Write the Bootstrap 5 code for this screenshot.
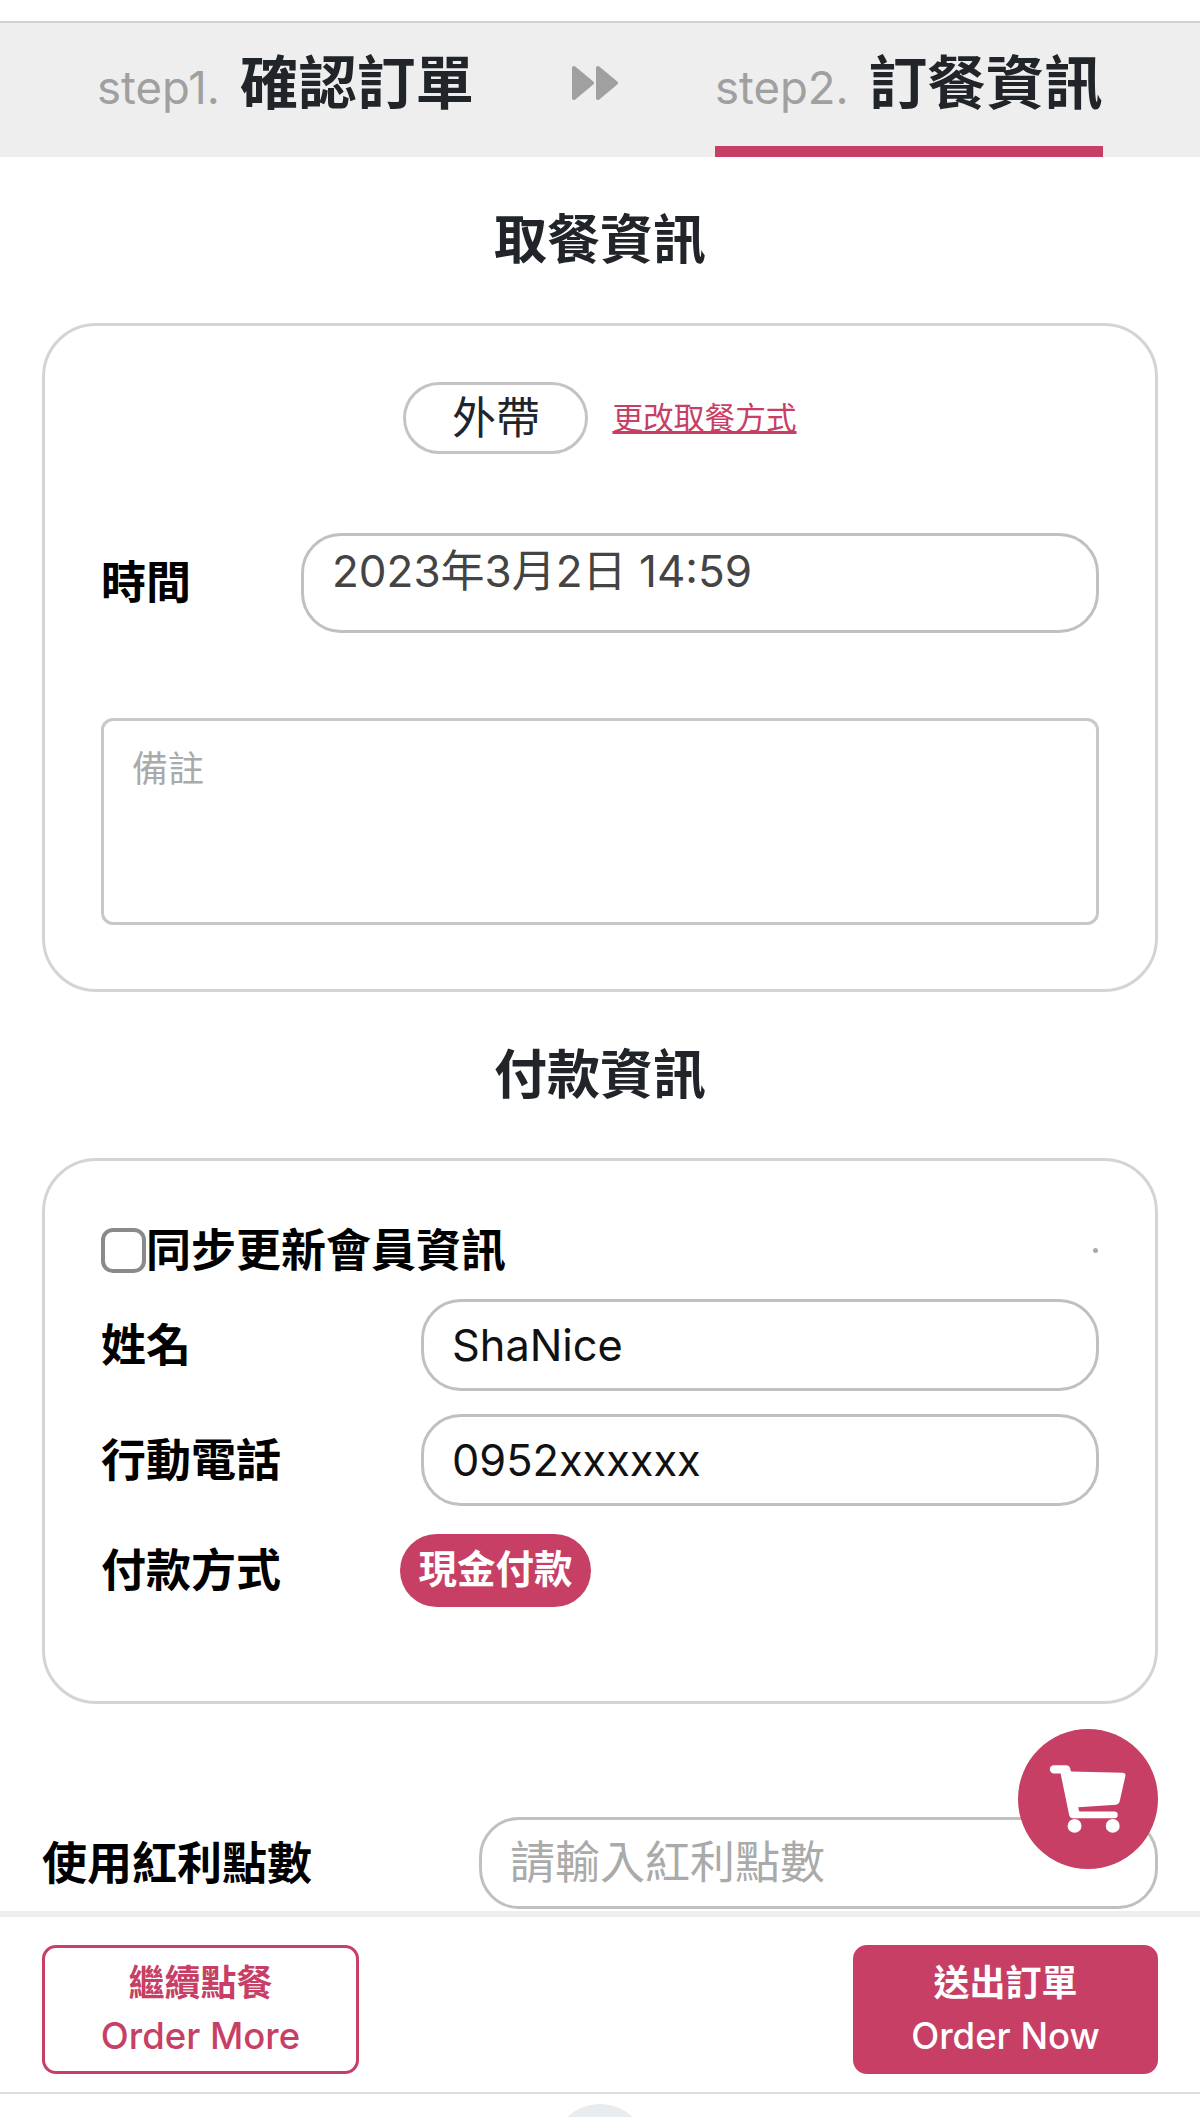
<!DOCTYPE html>
<html lang="zh-Hant">
<head>
  <meta charset="UTF-8" />
  <meta name="viewport" content="width=device-width, initial-scale=1" />
  <title>訂餐資訊</title>
  <link href="https://cdn.jsdelivr.net/npm/bootstrap@5.3.0/dist/css/bootstrap.min.css" rel="stylesheet" />
  <style>
    html, body { height: 2117px; overflow: hidden; }
    body { font-family: Inter, "Noto Sans CJK TC", sans-serif; color: #000; }

    /* step header */
    .step-bar { margin-top: 21px; height: 136px; background: #eee; border-top: 2px solid #d2d2d2; padding-left: 97px; }
    .step-item { height: 134px; padding-top: 30px; line-height: 60px; column-gap: 20px; }
    .step-item.is-active { border-bottom: 11px solid #c83f66; margin-left: 97px; width: 388px; }
    .step-num { font-size: 45.5px; color: #a0a0a0; }
    .step-name { font-size: 58.5px; font-weight: 700; color: #212529; }
    .step-arrow { margin-left: 98px; margin-top: 42px; width: 46px; height: 36px; }

    .sec-title { height: 166px; margin: 0; line-height: 166px; font-size: 53px; font-weight: 700; color: #212529; text-align: center; }
    .page-body { padding: 0 42px; }
    .info-box { border: 3px solid #d4d4d4; border-radius: 54px; padding: 56px 56px 64px; }
    .info-box.pay-box { padding: 67px 56px 94px; }

    .pickup-pill { width: 185px; height: 72px; line-height: 66px; font-size: 44px; text-align: center; color: #212529; border: 3px solid #c4c4c4; border-radius: 36px; }
    .pickup-link { font-size: 30.7px; color: #c83f66; }
    .field-label { font-size: 45px; font-weight: 700; line-height: 45px; flex-shrink: 0; }
    .label-up { padding-bottom: 2px; }

    .round-input.form-control { font-size: 43.3px; height: 92px; padding: 0 28px; border: 3px solid #c0c0c0; border-radius: 40px; color: #111; box-shadow: none; }
    .round-input.form-control::placeholder { color: #aaa; font-size: 45px; }
    .round-input.date-input { height: 100px; padding-bottom: 30px; font-size: 44px; color: #444; }
    .note-input.form-control { height: 207px; margin-top: 85px; padding: 21px 28px; font-size: 36px; border: 3px solid #c8c8c8; border-radius: 12px; resize: none; }
    .note-input.form-control::placeholder { color: #aaa; }

    .sync-check.form-check-input { width: 45px; height: 45px; margin: 0; border: 4px solid #8a8a8a; border-radius: 12px; flex-shrink: 0; }
    .tiny-dot { width: 5px; height: 5px; border-radius: 50%; background: #aaa; margin-right: 1px; }
    .label-col { width: 320px; }
    .pay-col { width: 299px; }
    .pay-pill { width: 191px; height: 73px; line-height: 71px; border-radius: 37px; background: #c83f66; color: #fff; font-size: 38.5px; font-weight: 700; text-align: center; }

    .bonus-row { margin-top: 113px; margin-bottom: 2px; }
    .bonus-row .field-label { width: 437px; }
    .cart-fab { top: -88px; right: 0; width: 140px; height: 140px; background: #c83f66; }

    .action-bar { border-top: 6px solid #eee; border-bottom: 2px solid #ddd; padding: 28px 42px 18px; }
    .action-btn.btn { height: 129px; padding: 0; font-size: 36.5px; font-weight: 500; line-height: 53px; border-radius: 14px; border: 3px solid #c83f66; }
    .action-btn b { display: block; font-size: 36px; }
    .btn-more.btn { width: 317px; color: #c83f66; background: #fff; }
    .btn-now.btn { width: 305px; color: #fff; background: #c83f66; }
    .home-peek { height: 23px; overflow: hidden; padding-top: 10px; }
    .home-peek span { display: block; width: 96px; height: 96px; border-radius: 50%; background: #e9ecef; }
  </style>
</head>
<body>

  <!-- steps -->
  <div class="step-bar d-flex">
    <div class="step-item d-flex align-items-baseline">
      <span class="step-num">step1.</span><span class="step-name">確認訂單</span>
    </div>
    <svg class="step-arrow" viewBox="0 0 46 36" fill="#a0a0a0" stroke="#a0a0a0" stroke-width="4" stroke-linejoin="round">
      <path d="M2 3 20 18 2 33z" /><path d="M26 3 44 18 26 33z" />
    </svg>
    <div class="step-item is-active d-flex align-items-baseline">
      <span class="step-num">step2.</span><span class="step-name">訂餐資訊</span>
    </div>
  </div>

  <div class="page-body">
    <h2 class="sec-title">取餐資訊</h2>
    <section class="info-box">
      <div class="d-flex justify-content-center align-items-center gap-4">
        <div class="pickup-pill">外帶</div>
        <a href="#" class="pickup-link">更改取餐方式</a>
      </div>
      <div class="d-flex align-items-center" style="margin-top:79px">
        <label class="field-label label-up" style="width:200px">時間</label>
        <input class="form-control round-input date-input" type="text" value="2023年3月2日 14:59" />
      </div>
      <textarea class="form-control note-input d-block" placeholder="備註"></textarea>
    </section>

    <h2 class="sec-title">付款資訊</h2>
    <section class="info-box pay-box">
      <div class="d-flex align-items-center">
        <input class="form-check-input sync-check" type="checkbox" id="sync-member" />
        <label class="field-label" for="sync-member">同步更新會員資訊</label>
        <span class="tiny-dot ms-auto"></span>
      </div>
      <div class="d-flex align-items-center" style="margin-top:26px">
        <label class="field-label label-col">姓名</label>
        <input class="form-control round-input" type="text" value="ShaNice" />
      </div>
      <div class="d-flex align-items-center" style="margin-top:23px">
        <label class="field-label label-col">行動電話</label>
        <input class="form-control round-input" type="text" value="0952xxxxxx" />
      </div>
      <div class="d-flex align-items-center" style="margin-top:28px">
        <label class="field-label pay-col">付款方式</label>
        <div class="pay-pill">現金付款</div>
      </div>
    </section>

    <div class="bonus-row d-flex align-items-center position-relative">
      <label class="field-label">使用紅利點數</label>
      <input class="form-control round-input" type="text" placeholder="請輸入紅利點數" />
      <div class="cart-fab position-absolute rounded-circle d-flex align-items-center justify-content-center">
        <svg width="78" height="72" viewBox="145 162 235 210" fill="#fff">
          <path d="M160 165H196q10 0 13 10l2 9 155 4q11 0 9 10l-17 76q-2 9-11 10L233 292l3 13H342q10 0 10 10t-10 10H216a10 10 0 0 1-10-8L180 190H160a12.5 12.5 0 0 1 0-25z" />
          <circle cx="222" cy="348" r="21" /><circle cx="337" cy="348" r="21" />
        </svg>
      </div>
    </div>
  </div>

  <!-- bottom actions -->
  <div class="action-bar d-flex justify-content-between">
    <button class="btn action-btn btn-more" type="button"><b>繼續點餐</b>Order More</button>
    <button class="btn action-btn btn-now" type="button"><b>送出訂單</b>Order Now</button>
  </div>
  <div class="home-peek d-flex justify-content-center"><span></span></div>

  <script src="https://cdn.jsdelivr.net/npm/bootstrap@5.3.0/dist/js/bootstrap.bundle.min.js"></script>
</body>
</html>
